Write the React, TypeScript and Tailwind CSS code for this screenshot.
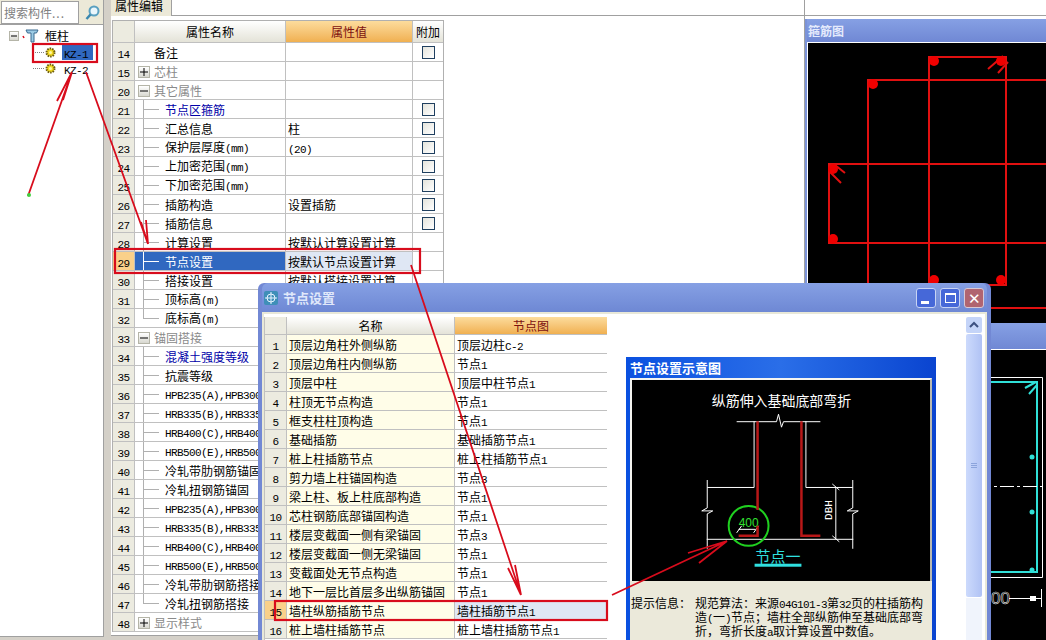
import { Fragment } from "react";

const font = { fontFamily: '"Noto Sans CJK SC", "Liberation Sans", sans-serif' };
const mono = { fontFamily: '"Liberation Mono", monospace' };

type Prop = {
  no: number;
  name: string;
  value?: string;
  check?: boolean;
  kind?: "plus" | "minus" | "plain" | "blue" | "leaf" | "last";
};

const props: Prop[] = [
  { no: 14, name: "备注", check: true, kind: "plain" },
  { no: 15, name: "芯柱", kind: "plus" },
  { no: 20, name: "其它属性", kind: "minus" },
  { no: 21, name: "节点区箍筋", check: true, kind: "blue" },
  { no: 22, name: "汇总信息", value: "柱", check: true },
  { no: 23, name: "保护层厚度(mm)", value: "(20)", check: true },
  { no: 24, name: "上加密范围(mm)", check: true },
  { no: 25, name: "下加密范围(mm)", check: true },
  { no: 26, name: "插筋构造", value: "设置插筋", check: true },
  { no: 27, name: "插筋信息", check: true },
  { no: 28, name: "计算设置", value: "按默认计算设置计算" },
  { no: 29, name: "节点设置", value: "按默认节点设置计算" },
  { no: 30, name: "搭接设置", value: "按默认搭接设置计算" },
  { no: 31, name: "顶标高(m)" },
  { no: 32, name: "底标高(m)", kind: "last" },
  { no: 33, name: "锚固搭接", kind: "minus" },
  { no: 34, name: "混凝土强度等级", kind: "blue" },
  { no: 35, name: "抗震等级" },
  { no: 36, name: "HPB235(A),HPB300锚固" },
  { no: 37, name: "HRB335(B),HRB335锚固" },
  { no: 38, name: "HRB400(C),HRB400锚固" },
  { no: 39, name: "HRB500(E),HRB500锚固" },
  { no: 40, name: "冷轧带肋钢筋锚固" },
  { no: 41, name: "冷轧扭钢筋锚固" },
  { no: 42, name: "HPB235(A),HPB300搭接" },
  { no: 43, name: "HRB335(B),HRB335搭接" },
  { no: 44, name: "HRB400(C),HRB400搭接" },
  { no: 45, name: "HRB500(E),HRB500搭接" },
  { no: 46, name: "冷轧带肋钢筋搭接" },
  { no: 47, name: "冷轧扭钢筋搭接", kind: "last" },
  { no: 48, name: "显示样式", kind: "plus" },
];

const nodes: [string, string][] = [
  ["顶层边角柱外侧纵筋", "顶层边柱C-2"],
  ["顶层边角柱内侧纵筋", "节点1"],
  ["顶层中柱", "顶层中柱节点1"],
  ["柱顶无节点构造", "节点1"],
  ["框支柱柱顶构造", "节点1"],
  ["基础插筋", "基础插筋节点1"],
  ["桩上柱插筋节点", "桩上柱插筋节点1"],
  ["剪力墙上柱锚固构造", "节点3"],
  ["梁上柱、板上柱底部构造", "节点1"],
  ["芯柱钢筋底部锚固构造", "节点1"],
  ["楼层变截面一侧有梁锚固", "节点3"],
  ["楼层变截面一侧无梁锚固", "节点1"],
  ["变截面处无节点构造", "节点1"],
  ["地下一层比首层多出纵筋锚固", "节点1"],
  ["墙柱纵筋插筋节点", "墙柱插筋节点1"],
  ["桩上墙柱插筋节点", "桩上墙柱插筋节点1"],
];

// 西文按等宽 6px 走，和中文混排
function Txt({ children }: { children?: string }) {
  if (!children) return null;
  return (
    <>
      {children.split(/([\x21-\x7e]+)/).map((part, i) =>
        i % 2 === 1 ? (
          <span key={i} className="text-[11px] tracking-[-0.6px]" style={mono}>
            {part}
          </span>
        ) : (
          part
        )
      )}
    </>
  );
}

function Toggle({ open, small }: { open: boolean; small?: boolean }) {
  return (
    <span
      className={`relative block shrink-0 border border-[#b5b5a8] bg-gradient-to-b from-white to-[#d8d8d0] ${
        small ? "h-[10px] w-[10px]" : "h-[12px] w-[12px]"
      }`}
    >
      <span className="absolute left-[1px] right-[1px] top-1/2 h-px -translate-y-1/2 bg-black" />
      {!open && <span className="absolute bottom-[1px] left-1/2 top-[1px] w-px -translate-x-1/2 bg-black" />}
    </span>
  );
}

function PropRow({ p }: { p: Prop }) {
  const selected = p.no === 29;
  const group = p.kind === "plus" || p.kind === "minus";
  const leaf = !group && p.kind !== "plain";
  return (
    <div className="flex h-[19px] border-b border-[#c0c0c0] leading-[20px]">
      <div
        className={`w-[22px] shrink-0 border-r border-[#c0c0c0] text-center ${
          selected ? "bg-[#fad08a]" : "bg-[#ecebe0]"
        }`}
      >
        <Txt>{String(p.no)}</Txt>
      </div>
      <div
        className={`relative flex w-[151px] shrink-0 items-center overflow-hidden whitespace-nowrap border-r border-[#c0c0c0] pt-[1px] ${
          selected ? "bg-[#3068c0] text-white" : ""
        }`}
      >
        {group && (
          <span className="ml-[3px] mr-[4px]">
            <Toggle open={p.kind === "minus"} />
          </span>
        )}
        {p.kind === "plain" && <span className="ml-[19px]">{p.name}</span>}
        {leaf && (
          <Fragment>
            <span className={`absolute left-[8px] top-0 w-px ${p.kind === "last" ? "h-[9px]" : "h-[19px]"} ${selected ? "bg-white" : "bg-[#b0b0b0]"}`} />
            <span className={`ml-[8px] mr-[6px] h-px w-[16px] shrink-0 ${selected ? "bg-white" : "bg-[#b0b0b0]"}`} />
            <span className={p.kind === "blue" ? "text-[#0000a8]" : ""}>
              <Txt>{p.name}</Txt>
            </span>
          </Fragment>
        )}
        {group && <span className="text-[#8a8a8a]">{p.name}</span>}
      </div>
      <div
        className={`w-[127px] shrink-0 whitespace-nowrap border-r border-[#c0c0c0] pl-[2px] ${
          selected ? "bg-[#dfe7f4]" : ""
        }`}
      >
        <Txt>{p.value}</Txt>
      </div>
      <div className="flex w-[30px] shrink-0 items-center justify-center">
        {p.check && <span className="block h-[13px] w-[13px] border border-[#1f3f5f] bg-gradient-to-br from-[#e4e4dc] to-white" />}
      </div>
    </div>
  );
}

function StirrupDrawing() {
  return (
    <svg className="block h-[280px] w-[238px]" viewBox="0 0 238 280">
      <g fill="none" stroke="#e01010" strokeWidth="2">
        <rect x="121" y="14" width="77" height="228" />
        <rect x="60" y="37" width="200" height="228" />
        <rect x="21" y="121" width="240" height="79" />
        <path d="M180 26 L195 13 M190 30 L200 19 M27 122 L37 130 M22 129 L33 140" />
      </g>
      <g fill="#f00000">
        <circle cx="126" cy="18" r="5" />
        <circle cx="193" cy="18" r="5" />
        <circle cx="65" cy="41" r="5" />
        <circle cx="25" cy="126" r="5" />
        <circle cx="25" cy="196" r="5" />
        <circle cx="126" cy="237" r="5" />
        <circle cx="193" cy="237" r="5" />
      </g>
    </svg>
  );
}

function SideDrawing() {
  return (
    <svg className="block h-[290px] w-[238px]" viewBox="0 0 238 290">
      <path d="M100 27.5 H234.5 V227.5 H100" fill="none" stroke="#ffffff" />
      <path d="M100 32 H229 V222 H100" fill="none" stroke="#30e0d8" strokeWidth="2" />
      <path d="M217 38 L228 32 M221 44 L229 35" fill="none" stroke="#30e0d8" strokeWidth="2" />
      <path d="M100 136.5 H238" fill="none" stroke="#ffffff" strokeDasharray="14 3 3 3" />
      <g fill="#30e0d8">
        <circle cx="224" cy="107" r="2.5" />
        <circle cx="224" cy="162" r="2.5" />
        <circle cx="224" cy="220" r="2.5" />
      </g>
      <path d="M201 248.5 H233 M233.5 239 V257" fill="none" stroke="#ffffff" />
      <rect x="222" y="246" width="6" height="5" fill="#ffffff" />
      <text x="183" y="254" fill="none" stroke="#ffffff" strokeWidth="0.5" fontSize="17" style={{ fontFamily: '"Liberation Sans", sans-serif' }}>
        00
      </text>
    </svg>
  );
}

function NodeDiagram() {
  return (
    <svg className="block h-[201px] w-full" viewBox="0 0 299 201">
      <text x="150" y="26" textAnchor="middle" fill="#ffffff" fontSize="14" style={font}>
        纵筋伸入基础底部弯折
      </text>
      <g fill="none" stroke="#ffffff" strokeWidth="1">
        <path d="M105 41.5 H145 L147 34 L150 47 L152 41.5 H189" />
        <path d="M122.5 41 V107.5 H75.5 M75.5 100 V128 L70 131 H81 L75.5 134 V169" />
        <path d="M174.5 41 V107.5 H221.5 M221.5 100 V128 L216 131 H227 L221.5 134 V169" />
        <path d="M75 159.5 H222" />
        <path d="M204.5 107 V159 M201 104 L208 110 M201 156 L208 162" />
        <path d="M107 149.5 H124 M105 153 L110 146 M122 153 L127 146" />
      </g>
      <text x="201" y="140" fill="#ffffff" fontSize="11" transform="rotate(-90 201 140)" style={mono}>
        DBH
      </text>
      <text x="107" y="147" fill="#30e030" fontSize="12" style={{ fontFamily: '"Liberation Sans", sans-serif' }}>
        400
      </text>
      <circle cx="117" cy="146" r="20" fill="none" stroke="#20d020" strokeWidth="2" />
      <path d="M126 41 V130 M126 146 V156 H107 M170 41 V156 H189" fill="none" stroke="#b81818" strokeWidth="2.5" />
      <text x="124" y="182" fill="#30e0e0" fontSize="15" style={font}>
        节点一
      </text>
      <rect x="123" y="184" width="47" height="3" fill="#30e0e0" />
    </svg>
  );
}

function Annotations() {
  return (
    <svg className="pointer-events-none absolute left-0 top-0 h-[640px] w-[1046px]" viewBox="0 0 1046 640">
      <g fill="none" stroke="#d80c1c">
        <rect x="33" y="44" width="64" height="18" strokeWidth="2.2" />
        <rect x="115" y="249" width="305" height="24" strokeWidth="2.2" />
        <rect x="275" y="601" width="332" height="19" strokeWidth="2.2" />
        <path d="M28 196 L72 72 M57 101 L72 72 M63 100 L72 72" strokeWidth="1.8" />
        <path d="M86 72 L148 244 M141 222 L148 244 M146 220 L148 244" strokeWidth="1.8" />
        <path d="M411 265 L521 595 M508 568 L521 595 M515 565 L521 595" strokeWidth="1.8" />
        <path d="M612 595 L727 541 M688 553 L727 541 M699 563 L727 541" strokeWidth="1.8" />
        <path d="M23 36 L24 38" strokeWidth="1.5" />
      </g>
      <circle cx="29" cy="195" r="2" fill="#40d040" />
    </svg>
  );
}

function NodeDialog() {
  return (
    <div className="absolute left-[258px] top-[283px] h-[357px] w-[733px] rounded-t-[6px] bg-[#7288d4] px-[4px]">
      <div className="flex h-[29px] items-center rounded-t-[6px] bg-gradient-to-b from-[#86a0e4] to-[#6e88d4]">
        <svg className="ml-[1px] h-[16px] w-[16px]" viewBox="0 0 16 16">
          <rect x="1" y="1" width="14" height="14" rx="2" fill="#3f8fb8" />
          <circle cx="8" cy="8" r="4" fill="none" stroke="#e8f4ff" />
          <path d="M8 2 V14 M2 8 H14" stroke="#e8f4ff" />
        </svg>
        <span className="ml-[4px] text-[13px] font-bold text-[#e0e8fa]">节点设置</span>
        <div className="ml-auto mr-[3px] flex gap-[4px]">
          <span className="relative block h-[20px] w-[20px] rounded-[3px] border border-[#c8d4f4] bg-[#4668d8]">
            <span className="absolute bottom-[3px] left-[4px] h-[3px] w-[8px] bg-white" />
          </span>
          <span className="flex h-[20px] w-[20px] items-center justify-center rounded-[3px] border border-[#c8d4f4] bg-[#4668d8]">
            <span className="block h-[10px] w-[11px] border border-t-2 border-white" />
          </span>
          <span className="flex h-[20px] w-[20px] items-center justify-center rounded-[3px] border border-[#d8c8d4] bg-[#b06470] text-[15px] leading-none text-white">
            ✕
          </span>
        </div>
      </div>
      <div className="flex h-[328px] border-2 border-b-0 border-[#e8e8d8] bg-white pt-[3px]">
        <div className="w-[343px] shrink-0 overflow-hidden border-l border-[#c0c0c0]">
          <div className="flex h-[18px] border-b border-[#c0c0c0] leading-[18px]">
            <div className="w-[22px] shrink-0 border-r border-[#c0c0c0] bg-[#ecebe0]" />
            <div className="w-[168px] shrink-0 border-r border-[#c0c0c0] bg-gradient-to-b from-white to-[#e4e3d8] text-center">名称</div>
            <div className="flex-1 bg-gradient-to-b from-[#fcdc9c] to-[#f0b050] text-center text-[#7c1010]">节点图</div>
          </div>
          {nodes.map(([name, value], i) => (
            <div key={name} className="flex h-[19px] border-b border-[#c0c0c0] leading-[20px]">
              <div className={`w-[22px] shrink-0 border-r border-[#c0c0c0] text-center ${i === 14 ? "bg-[#fad08a]" : "bg-[#ecebe0]"}`}>
                <Txt>{String(i + 1)}</Txt>
              </div>
              <div className="w-[168px] shrink-0 overflow-hidden whitespace-nowrap border-r border-[#c0c0c0] bg-[#fffde8] pl-[2px]">
                {name}
              </div>
              <div className={`flex-1 pl-[2px] ${i === 14 ? "bg-[#dfe7f4]" : ""}`}>
                <Txt>{value}</Txt>
              </div>
            </div>
          ))}
        </div>

        <div className="ml-[19px] mt-[40px] flex w-[310px] shrink-0 flex-col bg-gradient-to-r from-[#0a50e0] via-[#2a6ee8] to-[#0a44d0] px-[4px]">
          <div className="flex h-[21px] shrink-0 items-center text-[13px] font-bold text-white">节点设置示意图</div>
          <div className="border-2 border-b-0 border-[#f4f4f0] border-r-[#b8b8b0] bg-black">
            <NodeDiagram />
          </div>
          <div className="flex flex-1 bg-[#ebe9da] pt-[16px] text-[12px] leading-[12px]">
            <span className="w-[65px] shrink-0 pl-px">提示信息：</span>
            <span className="w-[229px]">
              <Txt>规范算法：来源04G101-3第32页的柱插筋构造(一)节点；墙柱全部纵筋伸至基础底部弯折，弯折长度a取计算设置中数值。</Txt>
            </span>
          </div>
        </div>

        <div className="ml-[30px] flex w-[16px] shrink-0 flex-col gap-px">
          <div className="flex h-[16px] shrink-0 items-center justify-center rounded-[2px] bg-[#c4d4f8]">
            <svg className="h-[8px] w-[10px]" viewBox="0 0 10 8">
              <path d="M1 6 L5 2 L9 6" fill="none" stroke="#3c5080" strokeWidth="2" />
            </svg>
          </div>
          <div className="flex h-[263px] shrink-0 flex-col items-center justify-center gap-px rounded-[2px] bg-gradient-to-r from-[#ccdafc] to-[#b0c2f4]">
            <span className="h-px w-[6px] bg-[#8ca4dc]" />
            <span className="h-px w-[6px] bg-[#8ca4dc]" />
            <span className="h-px w-[6px] bg-[#8ca4dc]" />
          </div>
          <div className="flex-1 bg-[#f0f4fc]" />
        </div>
      </div>
    </div>
  );
}

export default function App() {
  return (
    <div className="relative flex h-[640px] w-[1046px] overflow-hidden bg-[#d4d0c8] text-[12px] text-black" style={font}>
      {/* 构件树 */}
      <div className="flex h-[637px] w-[104px] shrink-0 flex-col border-b border-r border-[#a0a0a0] bg-white">
        <div className="flex h-[25px] shrink-0 border-b border-[#a0a0a0] bg-[#ece9d8]">
          <div className="ml-px mt-px h-[23px] w-[78px] border border-[#a0a0a0] bg-white pl-[2px] leading-[21px] text-[#808080]">
            搜索构件<span className="tracking-[1px]">...</span>
          </div>
          <svg className="ml-[5px] mt-[4px] h-[17px] w-[17px]" viewBox="0 0 17 17">
            <circle cx="10" cy="7" r="4.5" fill="#eaf6fc" stroke="#5aa0c0" strokeWidth="2" />
            <path d="M6.5 10.5 L2.5 15" stroke="#3a88b0" strokeWidth="2.5" />
          </svg>
        </div>
        <div className="flex h-[19px] shrink-0 items-center pl-[9px] pt-[2px]">
          <Toggle open small />
          <svg className="ml-[6px] h-[14px] w-[14px]" viewBox="0 0 14 14">
            <path d="M1 1 H13 L11.5 4 H9 V13 H6 V4 H2.5 Z" fill="#9ccbe4" stroke="#3a6a90" />
          </svg>
          <span className="ml-[6px]">框柱</span>
        </div>
        {["KZ-1", "KZ-2"].map((k, i) => (
          <div key={k} className="flex h-[16px] shrink-0 items-center pl-[33px]">
            <span className="w-[11px] border-t border-dotted border-[#808080]" />
            <svg className="ml-[1px] h-[11px] w-[11px]" viewBox="0 0 11 11">
              <circle cx="5.5" cy="5.5" r="4" fill="#f0d820" stroke="#6a5a10" strokeWidth="2" strokeDasharray="1.5 1" />
              <circle cx="5.5" cy="5.5" r="1.5" fill="#fff8a0" />
            </svg>
            <span className={`ml-[6px] h-[15px] w-[31px] pl-[2px] leading-[15px] ${i === 0 ? "bg-[#3068c0]" : ""}`}>
              <Txt>{k}</Txt>
            </span>
          </div>
        ))}
      </div>

      {/* 属性编辑 */}
      <div className="ml-[7px] flex h-[636px] w-[694px] shrink-0 flex-col border-b border-r border-[#a0a0a0] bg-white">
        <div className="flex h-[16px] shrink-0 border-b border-[#a0a0a0]">
          <div className="h-[16px] w-[61px] border-r border-[#a0a0a0] bg-[#ece9d8] pl-[4px] leading-[12px]">属性编辑</div>
        </div>
        <div className="min-h-0 flex-1 pl-px pt-[4px]">
          <div className="w-[332px] border-x border-t border-[#b0b0b0]">
            <div className="flex h-[22px] border-b border-[#c0c0c0] leading-[21px]">
              <div className="w-[22px] shrink-0 border-r border-[#c0c0c0] bg-[#ecebe0]" />
              <div className="w-[151px] shrink-0 border-r border-[#c0c0c0] bg-gradient-to-b from-white to-[#e4e3d8] text-center">属性名称</div>
              <div className="w-[127px] shrink-0 border-r border-[#c0c0c0] bg-gradient-to-b from-[#fcdc9c] to-[#f0b050] text-center text-[#7c1010]">属性值</div>
              <div className="w-[30px] shrink-0 bg-gradient-to-b from-white to-[#e4e3d8] text-center">附加</div>
            </div>
            {props.map((p) => (
              <PropRow key={p.no} p={p} />
            ))}
          </div>
        </div>
      </div>

      {/* 配筋图 */}
      <div className="flex min-w-0 flex-1 flex-col bg-white">
        <div className="h-[16px] shrink-0 border-b border-[#a0a0a0]" />
        <div className="flex min-h-0 flex-1 flex-col bg-white pt-[3px]">
          <div className="flex min-h-0 flex-1 flex-col bg-[#7b93d8] pl-[2px]">
            <div className="flex h-[23px] shrink-0 items-center bg-gradient-to-b from-[#86a0e4] to-[#7088d4] pl-[1px] text-[12px] font-bold text-[#e4eafc]">
              箍筋图
            </div>
            <div className="h-[281px] shrink-0 border-l border-t border-white bg-black">
              <StirrupDrawing />
            </div>
            <div className="h-[26px] shrink-0 bg-gradient-to-b from-[#86a0e4] to-[#7088d4]" />
            <div className="min-h-0 flex-1 border-l border-t border-white bg-black">
              <SideDrawing />
            </div>
          </div>
        </div>
      </div>

      <NodeDialog />
      <Annotations />
    </div>
  );
}
